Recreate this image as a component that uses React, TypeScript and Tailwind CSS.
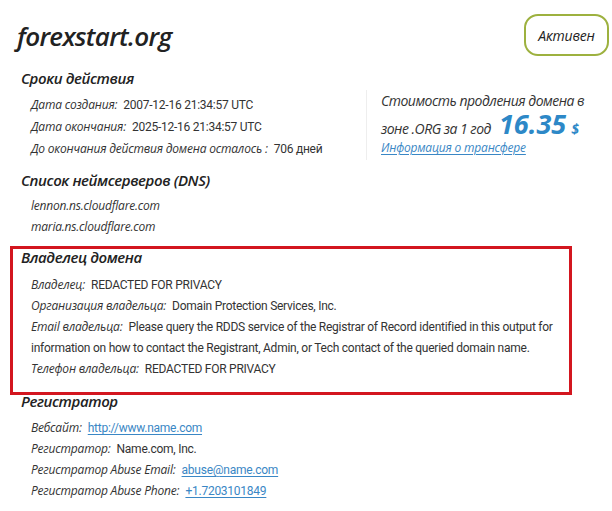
import React from "react";

const head = "font-['Open_Sans',sans-serif] italic font-semibold text-[15px] text-[#222] tracking-[-0.4px]";
const label = "font-['Open_Sans',sans-serif] italic text-[12px] leading-[14px] tracking-[-0.2px]";
const link = "text-[#3a87c5] underline underline-offset-2 decoration-1";

function Row({ k, children }: { k: string; children: React.ReactNode }) {
  return (
    <div className="font-['Roboto',sans-serif] text-[12px] leading-[21px] tracking-[-0.25px] text-[#333]">
      <span className={label}>{k}:</span>
      <span className="ml-[6px]">{children}</span>
    </div>
  );
}

export default function App() {
  return (
    <div className="w-[612px] h-[511px] overflow-hidden bg-white pl-[21px] pr-[3px] pt-[14px]">
      {/* header */}
      <div className="flex h-[42px] items-start justify-between">
        <h1 className="-ml-[4px] mt-[4px] font-['Open_Sans',sans-serif] italic font-semibold text-[26px] leading-[36px] text-[#222] tracking-[-0.7px]">
          forexstart.org
        </h1>
        <div className="flex h-[42px] w-[85px] items-center justify-center rounded-[14px] border-2 border-[#9db13f] font-['Open_Sans',sans-serif] italic font-medium text-[14px] text-[#222] tracking-[-0.2px]">
          Активен
        </div>
      </div>

      {/* validity */}
      <h2 className={`${head} mt-[10px] leading-[24px]`}>Сроки действия</h2>
      <div className="mt-[4px] flex">
        <div className="w-[345px] pl-[10px] [&>div]:leading-[22px]">
          <Row k="Дата создания">2007-12-16 21:34:57 UTC</Row>
          <Row k="Дата окончания">2025-12-16 21:34:57 UTC</Row>
          <Row k="До окончания действия домена осталось ">706 дней</Row>
        </div>
        <div className="-mt-[4px] border-l border-[#eeeeee] pl-[14px] font-['Open_Sans',sans-serif] italic text-[#333]">
          <div className="text-[14px] leading-[22px] tracking-[-0.5px]">Стоимость продления домена в</div>
          <div className="flex h-[26px] items-baseline text-[14px] leading-[26px] tracking-[-0.5px]">
            <span>зоне .ORG за 1 год</span>
            <span className="ml-[8px] font-bold text-[27px] leading-[24px] text-[#2d88c7] tracking-[0px]">16.35</span>
            <span className="ml-[5px] font-bold text-[14px] text-[#2d88c7]">$</span>
          </div>
          <div className={`mt-[2px] text-[12px] leading-[16px] tracking-[-0.2px] ${link}`}>Информация о трансфере</div>
        </div>
      </div>

      {/* name servers */}
      <h2 className={`${head} mt-[8px] leading-[24px]`}>Список неймсерверов (DNS)</h2>
      <div className="mt-[3px] pl-[10px] font-['Open_Sans',sans-serif] italic text-[12px] leading-[21px] tracking-[-0.2px] text-[#333]">
        <div>lennon.ns.cloudflare.com</div>
        <div>maria.ns.cloudflare.com</div>
      </div>

      {/* owner */}
      <div className="-ml-[11px] mt-[9px] w-[562px] border-[3px] border-[#d3161f] pl-[8px] pb-[12px] pr-[2px]">
        <h2 className={`${head} leading-[16px]`}>Владелец домена</h2>
        <div className="mt-[10px] pl-[10px]">
          <Row k="Владелец">REDACTED FOR PRIVACY</Row>
          <Row k="Организация владельца">Domain Protection Services, Inc.</Row>
          <Row k="Email владельца">
            Please query the RDDS service of the Registrar of Record identified in this output for information on how to contact the Registrant, Admin, or Tech contact of the queried domain name.
          </Row>
          <Row k="Телефон владельца">REDACTED FOR PRIVACY</Row>
        </div>
      </div>

      {/* registrar */}
      <h2 className={`${head} -mt-[2px] leading-[16px]`}>Регистратор</h2>
      <div className="mt-[9px] pl-[10px]">
        <Row k="Вебсайт"><span className={link}>http://www.name.com</span></Row>
        <Row k="Регистратор">Name.com, Inc.</Row>
        <Row k="Регистратор Abuse Email"><span className={link}>abuse@name.com</span></Row>
        <Row k="Регистратор Abuse Phone"><span className={link}>+1.7203101849</span></Row>
      </div>
    </div>
  );
}
